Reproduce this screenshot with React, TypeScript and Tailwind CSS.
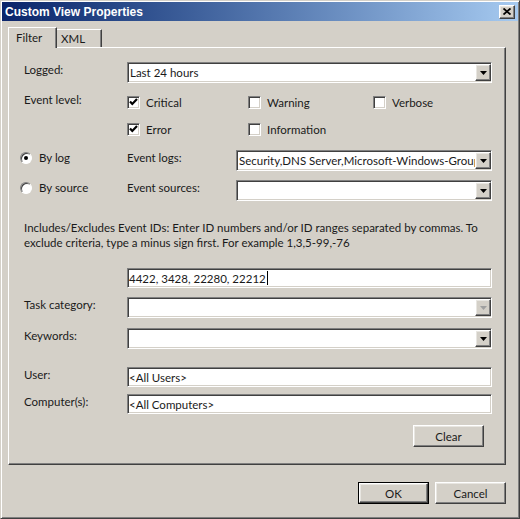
import React from 'react'

// ── Classic 3D edges ──────────────────────────────────────────────
const sunken =
  'border border-t-[#808080] border-l-[#808080] border-b-white border-r-white shadow-[inset_1px_1px_0_#404040,inset_-1px_-1px_0_#d4d0c8]'
const raised =
  'border border-t-white border-l-white border-b-[#404040] border-r-[#404040] shadow-[inset_-1px_-1px_0_#808080,inset_1px_1px_0_#e8e6e1]'

function Arrow({ disabled = false }: { disabled?: boolean }) {
  return (
    <div className={`w-[16px] h-[17px] bg-[#d4d0c8] ${raised} flex items-center justify-center shrink-0`}>
      <svg width="7" height="4" viewBox="0 0 7 4">
        <polygon points="0,0 7,0 3.5,4" fill={disabled ? '#a0a0a0' : '#000'} />
      </svg>
    </div>
  )
}

function Dropdown({ value = '', width, disabled = false }: { value?: string; width: string; disabled?: boolean }) {
  return (
    <div className={`${width} h-[21px] bg-white ${sunken} flex items-center overflow-hidden`}>
      <span className="flex-1 min-w-0 overflow-hidden whitespace-nowrap pl-[2px] leading-[15px]">{value}</span>
      <Arrow disabled={disabled} />
    </div>
  )
}

function TextBox({ value = '', caret = false }: { value?: string; caret?: boolean }) {
  return (
    <div className={`w-[365px] h-[20px] bg-white ${sunken} flex items-center pl-[1px]`}>
      <span className="whitespace-nowrap leading-[15px]">{value}</span>
      {caret && <span className="w-px h-[14px] bg-black ml-[1px]" />}
    </div>
  )
}

function Check({ label, checked }: { label: string; checked: boolean }) {
  return (
    <div className="flex items-center gap-[6px]">
      <div className={`w-[13px] h-[13px] bg-white ${sunken} flex items-center justify-center`}>
        {checked && (
          <svg width="9" height="8" viewBox="0 0 9 8">
            <polyline points="1,3.5 3.3,6 8,1" fill="none" stroke="#000" strokeWidth="2.2" />
          </svg>
        )}
      </div>
      <span className="leading-[15px]">{label}</span>
    </div>
  )
}

function Radio({ label, checked }: { label: string; checked: boolean }) {
  return (
    <div className="flex items-center gap-[7px]">
      <div className="w-[12px] h-[12px] rounded-full bg-white border border-t-[#808080] border-l-[#808080] border-b-white border-r-white shadow-[inset_1px_1px_0_#404040] flex items-center justify-center">
        {checked && <div className="w-[4px] h-[4px] rounded-full bg-black" />}
      </div>
      <span className="leading-[15px]">{label}</span>
    </div>
  )
}

function Button({ label, isDefault = false, width = 'w-[71px]' }: { label: string; isDefault?: boolean; width?: string }) {
  return (
    <div className={`${width} h-[22px] ${isDefault ? 'border border-black' : ''}`}>
      <div className={`w-full h-full bg-[#d4d0c8] ${raised} flex items-center justify-center leading-[15px]`}>
        {label}
      </div>
    </div>
  )
}

function Label({ children, width = 'w-[103px]' }: { children: React.ReactNode; width?: string }) {
  return <div className={`${width} shrink-0 pt-[1px] leading-[14px]`}>{children}</div>
}

export default function App() {
  return (
    <div
      className="w-[520px] h-[519px] bg-[#d4d0c8] border border-t-[#d4d0c8] border-l-[#d4d0c8] border-b-[#404040] border-r-[#404040] shadow-[inset_1px_1px_0_#fff,inset_-1px_-1px_0_#808080] p-[1px] text-[11.5px] text-[#1a1a1a] overflow-hidden"
      style={{ fontFamily: 'Lato, "Liberation Sans", sans-serif' }}
    >
      {/* Title bar */}
      <div className="h-[19px] bg-linear-to-r from-[#0a246a] to-[#a6caf0] flex items-center pl-[3px] pr-[3px]">
        <span className="text-white font-bold text-[12px] leading-[14px]" style={{ fontFamily: '"Liberation Sans", sans-serif' }}>
          Custom View Properties
        </span>
        <div className={`ml-auto w-[16px] h-[14px] bg-[#d4d0c8] ${raised} flex items-center justify-center`}>
          <svg width="8" height="7" viewBox="0 0 8 7">
            <path d="M0.5 0.5 L7.5 6.5 M7.5 0.5 L0.5 6.5" stroke="#000" strokeWidth="1.8" />
          </svg>
        </div>
      </div>

      {/* Tabs */}
      <div className="mt-[6px] ml-[6px] h-[20px] flex items-end relative z-10">
        <div className="w-[49px] h-[21px] -mb-[1px] bg-[#d4d0c8] border-t border-l border-t-white border-l-white border-r border-r-[#404040] shadow-[inset_-1px_0_0_#808080] flex items-start pl-[7px] pt-[3px] leading-[14px]">
          Filter
        </div>
        <div className="w-[45px] h-[18px] bg-[#d4d0c8] border-t border-t-white border-r border-r-[#404040] shadow-[inset_-1px_0_0_#808080] flex items-start pl-[4px] pt-[2px] leading-[14px]">
          XML
        </div>
      </div>

      {/* Panel */}
      <div className="ml-[6px] w-[498px] h-[418px] border border-t-white border-l-white border-b-[#404040] border-r-[#404040] shadow-[inset_-1px_-1px_0_#808080] pl-[15px] flex flex-col">
        <div className="mt-[14px] flex items-start">
          <Label>Logged:</Label>
          <Dropdown value="Last 24 hours" width="w-[365px]" />
        </div>

        <div className="mt-[9px] h-[20px] flex items-center">
          <div className="w-[103px] shrink-0 leading-[14px] -mt-[4px]">Event level:</div>
          <div className="w-[121px]"><Check label="Critical" checked /></div>
          <div className="w-[125px]"><Check label="Warning" checked={false} /></div>
          <Check label="Verbose" checked={false} />
        </div>
        <div className="mt-[7px] h-[20px] flex items-center">
          <div className="w-[103px] shrink-0" />
          <div className="w-[121px]"><Check label="Error" checked /></div>
          <Check label="Information" checked={false} />
        </div>

        <div className="mt-[11px] flex items-start">
          <div className="w-[107px] -ml-[4px] shrink-0 pt-[0px]"><Radio label="By log" checked /></div>
          <Label width="w-[109px]">Event logs:</Label>
          <Dropdown value="Security,DNS Server,Microsoft-Windows-Group" width="w-[256px]" />
        </div>
        <div className="mt-[9px] flex items-start">
          <div className="w-[107px] -ml-[4px] shrink-0 pt-[0px]"><Radio label="By source" checked={false} /></div>
          <Label width="w-[109px]">Event sources:</Label>
          <Dropdown width="w-[256px]" />
        </div>

        <div className="mt-[19px] h-[30px] leading-[15px] whitespace-nowrap">
          Includes/Excludes Event IDs: Enter ID numbers and/or ID ranges separated by commas. To
          <br />
          exclude criteria, type a minus sign first. For example 1,3,5-99,-76
        </div>

        <div className="mt-[18px] flex items-start">
          <div className="w-[103px] shrink-0" />
          <TextBox value="4422, 3428, 22280, 22212" caret />
        </div>

        <div className="mt-[9px] flex items-start">
          <Label>Task category:</Label>
          <Dropdown width="w-[365px]" disabled />
        </div>
        <div className="mt-[10px] flex items-start">
          <Label>Keywords:</Label>
          <Dropdown width="w-[365px]" />
        </div>

        <div className="mt-[18px] flex items-start">
          <Label>User:</Label>
          <TextBox value="<All Users>" />
        </div>
        <div className="mt-[7px] flex items-start">
          <Label>Computer(s):</Label>
          <TextBox value="<All Computers>" />
        </div>

        <div className="mt-[11px] flex justify-end pr-[21px]">
          <Button label="Clear" />
        </div>
      </div>

      {/* Footer buttons */}
      <div className="mt-[17px] flex justify-end gap-[6px] pr-[12px]">
        <Button label="OK" isDefault />
        <Button label="Cancel" />
      </div>
    </div>
  )
}
